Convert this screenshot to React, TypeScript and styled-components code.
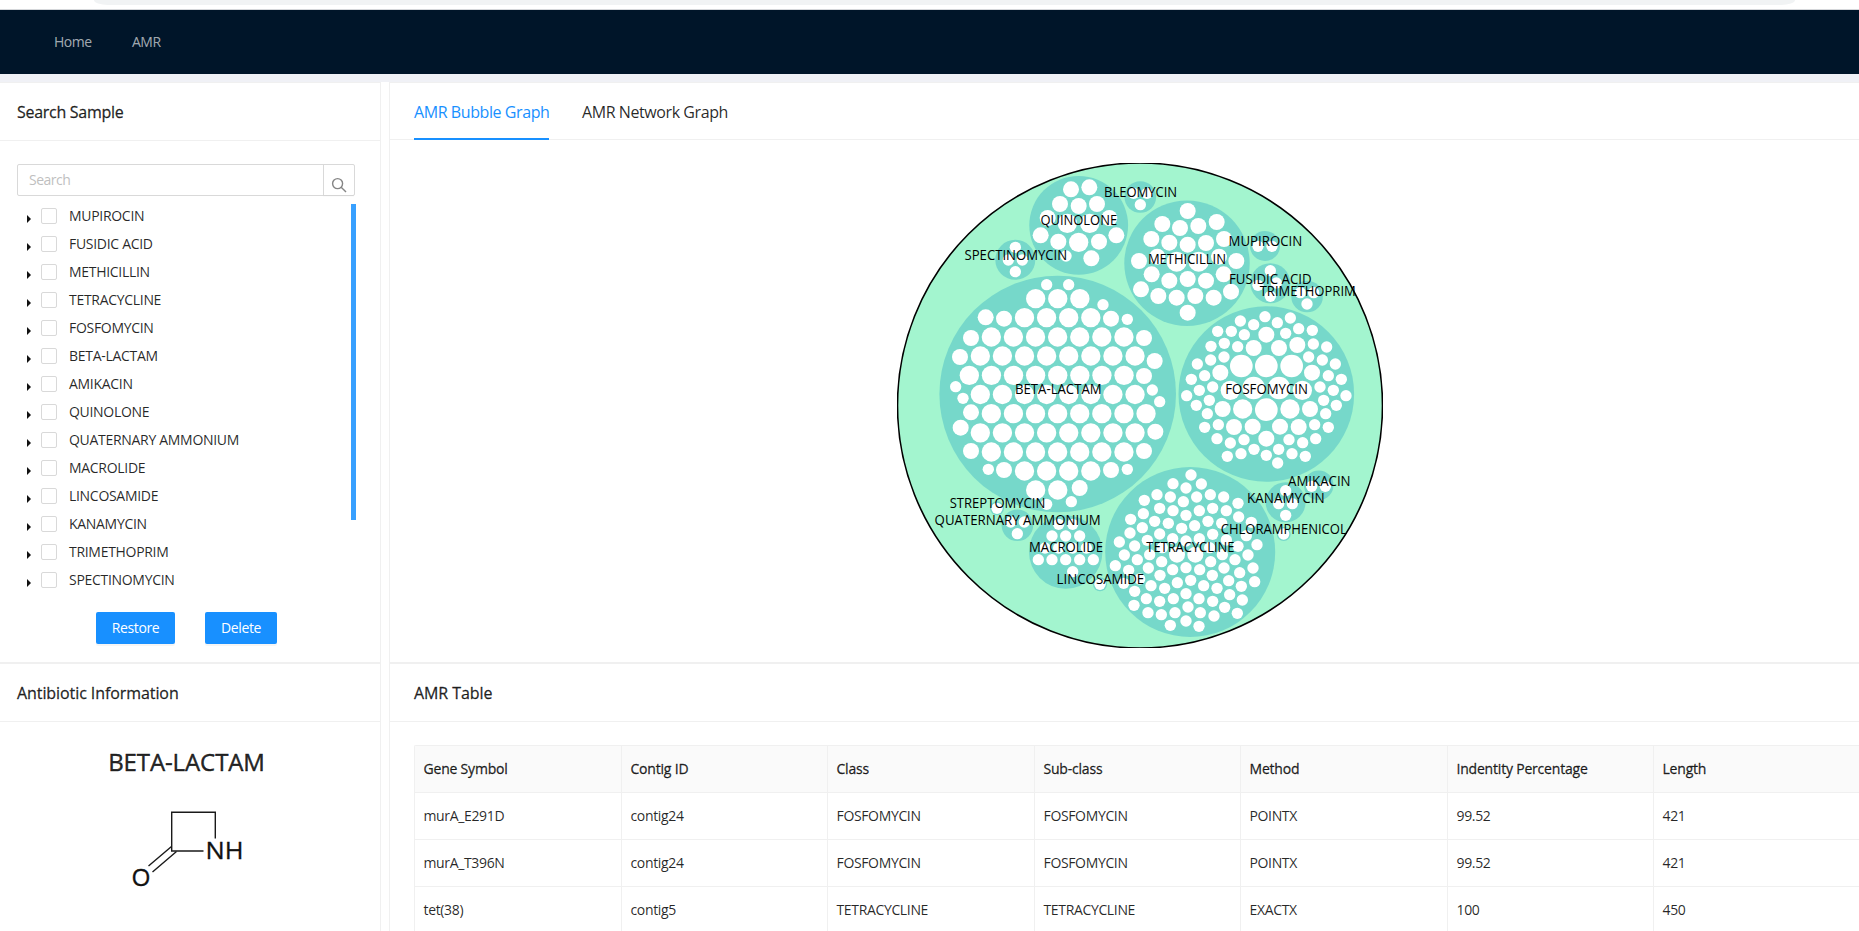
import React from 'react';
import styled, { createGlobalStyle } from 'styled-components';

const line = '#f0f0f0';
const ink = 'rgba(0, 0, 0, 0.85)';
const blue = '#1890ff';

const GlobalStyle = createGlobalStyle`
  *, *::before, *::after { box-sizing: border-box; }
  html, body { margin: 0; padding: 0; }
  body {
    overflow: hidden;
    background: #fff;
    color: ${ink};
    font: 400 14px/22px 'Open Sans', 'Noto Sans', sans-serif;
    letter-spacing: -0.5px;
  }
`;

const Page = styled.div`
  display: flex;
  flex-direction: column;
  width: 1859px;
  height: 931px;
  overflow: hidden;
`;

const BrowserEdge = styled.div`
  flex: none;
  height: 10px;
  padding: 0 64px 0 94px;
  border-bottom: 1px solid #d5d7da;
`;

const AddressBar = styled.div`
  height: 5px;
  background: #f1f3f4;
  border-radius: 0 0 14px 14px / 0 0 5px 5px;
`;

const NavBar = styled.nav`
  flex: none;
  display: flex;
  gap: 40px;
  height: 64px;
  padding-left: 54px;
  background: #001529;
`;

const NavItem = styled.a<{ $width: number }>`
  width: ${(p) => p.$width}px;
  line-height: 64px;
  color: rgba(255, 255, 255, 0.65);
  white-space: nowrap;
`;

const Strip = styled.div`
  flex: none;
  height: 8px;
  background: #f0f1f6;
`;

const Columns = styled.main`
  flex: 1;
  display: flex;
  gap: 8px;
  min-height: 0;
`;

const Side = styled.div`
  flex: none;
  display: flex;
  flex-direction: column;
  width: 381px;
`;

const Content = styled.div`
  flex: 1;
  display: flex;
  flex-direction: column;
  min-width: 0;
`;

const Card = styled.section<{ $height: number; $edge: 'left' | 'right' }>`
  flex: none;
  display: flex;
  flex-direction: column;
  height: ${(p) => p.$height}px;
  border: solid ${line};
  border-width: ${(p) => (p.$edge === 'left' ? '1px 0 1px 1px' : '1px 1px 1px 0')};
`;

const CardTitle = styled.h2<{ $indent: number; $tracking?: number }>`
  flex: none;
  height: 58px;
  margin: 0;
  padding-left: ${(p) => p.$indent}px;
  border-bottom: 1px solid ${line};
  font-size: 16px;
  font-weight: 400;
  line-height: 59px;
  letter-spacing: ${(p) => p.$tracking ?? -0.08}px;
  -webkit-text-stroke: 0.3px currentColor;
`;

const SearchRow = styled.div`
  display: flex;
  flex: none;
  width: 338px;
  height: 32px;
  margin: 23px 0 0 17px;
  border: 1px solid #d9d9d9;
  border-radius: 2px;
`;

const SearchInput = styled.div`
  flex: 1;
  padding-left: 11px;
  line-height: 30px;
  color: #bfbfbf;
`;

const SearchButton = styled.div`
  display: flex;
  justify-content: center;
  width: 31px;
  padding-top: 12px;
  border-left: 1px solid #d9d9d9;
  box-shadow: 0 2px 0 rgba(0, 0, 0, 0.015);
`;

const TreeArea = styled.div`
  display: flex;
  flex: none;
  justify-content: space-between;
  width: 356px;
  height: 396px;
  margin-top: 8px;
`;

const Tree = styled.ul`
  margin: 0;
  padding: 0 0 0 26px;
  list-style: none;
  letter-spacing: -0.3px;
`;

const TreeRow = styled.li`
  display: flex;
  align-items: center;
  height: 28px;
  padding-bottom: 4px;
  line-height: 24px;
  white-space: nowrap;
`;

const Arrow = styled.span`
  width: 0;
  height: 0;
  margin: 6px 10px 0 1px;
  border: solid transparent;
  border-width: 4px 0 4px 4px;
  border-left-color: #111;
`;

const Checkbox = styled.span`
  width: 16px;
  height: 16px;
  margin-right: 12px;
  border: 1px solid #d9d9d9;
  border-radius: 2px;
`;

const ScrollThumb = styled.div`
  width: 5px;
  height: 316px;
  background: #38a0ff;
`;

const Actions = styled.div`
  display: flex;
  gap: 30px;
  margin: 12px 0 0 96px;
`;

const Button = styled.button<{ $width: number }>`
  width: ${(p) => p.$width}px;
  height: 32px;
  padding: 0;
  border: 0;
  border-radius: 2px;
  background: ${blue};
  box-shadow: 0 2px 0 rgba(0, 0, 0, 0.04);
  color: #fff;
  font: inherit;
  letter-spacing: -0.4px;
`;

const Antibiotic = styled.div`
  display: flex;
  flex-direction: column;
  align-items: center;
  width: 373px;
  padding-top: 22px;
`;

const AntibioticName = styled.h3`
  margin: 0;
  font-size: 24px;
  font-weight: 400;
  line-height: 35px;
  letter-spacing: -0.1px;
  -webkit-text-stroke: 0.45px currentColor;
`;

const Molecule = styled.svg`
  width: 120px;
  height: 84px;
  margin: 27px 0 0 2px;
  overflow: visible;
  letter-spacing: 0;
`;

const Tabs = styled.div`
  flex: none;
  display: flex;
  gap: 33px;
  height: 57px;
  padding-left: 24px;
  border-bottom: 1px solid ${line};
`;

const Tab = styled.div<{ $active?: boolean; $width: number }>`
  width: ${(p) => p.$width}px;
  height: 57px;
  border-bottom: 2px solid ${(p) => (p.$active ? blue : 'transparent')};
  color: ${(p) => (p.$active ? blue : ink)};
  font-size: 16px;
  line-height: 59px;
  letter-spacing: -0.42px;
  white-space: nowrap;
`;

const BubbleChart = styled.svg`
  flex: none;
  width: 486px;
  height: 485px;
  margin: 23px 0 0 507px;
  letter-spacing: 0;
`;

const TableFrame = styled.div`
  margin: 23px 0 0 24px;
  overflow: hidden;
`;

const Table = styled.table`
  width: 1653px;
  table-layout: fixed;
  border-collapse: separate;
  border-spacing: 0;
  border: solid ${line};
  border-width: 1px 0 0 1px;
  border-radius: 2px 0 0 0;
`;

const Column = styled.col<{ $width: number }>`
  width: ${(p) => p.$width}px;
`;

const cell = `
  height: 47px;
  padding: 0 8px 0 8.5px;
  border: solid ${line};
  border-width: 0 1px 1px 0;
  text-align: left;
  white-space: nowrap;
`;

const HeadCell = styled.th`
  ${cell}
  background: #fafafa;
  font-weight: 400;
  letter-spacing: -0.2px;
  -webkit-text-stroke: 0.3px currentColor;
`;

const Cell = styled.td`
  ${cell}
  letter-spacing: -0.35px;
`;

type Dot = [number, number, number?];

interface Bubble {
  name: string;
  cx: number;
  cy: number;
  r: number;
  label: [number, number, number];
  origin: [number, number];
  dots: Dot[];
}

const row = (y: number, from: number, count: number): Dot[] =>
  Array.from({ length: count }, (_, i): Dot => [from + i * 66.3, y, 29]);

const topLeft: [number, number] = [930, 160];
const topRight: [number, number] = [1110, 160];
const bottomLeft: [number, number] = [920, 460];
const bottomRight: [number, number] = [1100, 460];

/* Dot positions and radii are in thirds of a pixel, counted from each bubble's origin. */
const bubbles: Bubble[] = [
  {
    name: 'QUINOLONE', cx: 1078.7, cy: 225.3, r: 49.4, label: [1040.2, 225, 77], origin: topLeft,
    dots: [[423, 88, 24], [478, 82, 24], [390, 132, 24], [446, 138, 24], [501, 132, 24], [353, 174, 24], [538, 174, 24], [412, 190, 29], [479, 190, 29], [332, 226, 24], [559, 226, 24], [385, 245, 24], [507, 245, 24], [446, 247, 29], [408, 288], [484, 295, 24]],
  },
  { name: 'BLEOMYCIN', cx: 1140.3, cy: 197, r: 15.8, label: [1103.7, 197, 73.5], origin: topLeft, dots: [[611, 100], [651, 100], [631, 134]] },
  { name: 'SPECTINOMYCIN', cx: 1015.3, cy: 259.8, r: 20, label: [964.2, 260, 103], origin: topLeft, dots: [[256, 262], [235, 300], [277, 300], [256, 335]] },
  {
    name: 'METHICILLIN', cx: 1187, cy: 263.2, r: 62.7, label: [1147.6, 264, 78.5], origin: topRight,
    dots: [[233, 153, 24], [157, 192, 24], [320, 186, 24], [210, 204, 24], [265, 198, 24], [124, 237, 24], [178, 248, 24], [233, 254, 24], [288, 249, 24], [342, 237, 24], [142, 290, 24], [327, 290, 24], [87, 303, 24], [200, 305, 30], [266, 305, 30], [379, 303, 24], [125, 343, 24], [341, 343, 24], [178, 362, 24], [233, 357, 24], [288, 362, 24], [93, 388, 24], [363, 395, 24], [145, 408, 24], [200, 413, 24], [256, 408, 24], [311, 413, 24], [233, 458, 24]],
  },
  { name: 'MUPIROCIN', cx: 1265, cy: 246, r: 15, label: [1228.3, 246, 74], origin: topRight, dots: [[444, 259], [486, 259]] },
  { name: 'FUSIDIC ACID', cx: 1270.3, cy: 283.2, r: 20, label: [1228.7, 284, 83], origin: topRight, dots: [[481, 332], [444, 376], [499, 369], [481, 409]] },
  { name: 'TRIMETHOPRIM', cx: 1307.1, cy: 296.5, r: 15.8, label: [1259.4, 296, 96.5], origin: topRight, dots: [[571, 398], [611, 398], [591, 432]] },
  {
    name: 'BETA-LACTAM', cx: 1057.7, cy: 394, r: 118.3, label: [1014.7, 394, 87], origin: [930, 270],
    dots: [
      [350, 44], [416, 44], ...row(86, 317, 3), [519, 104],
      [167, 142, 24], [222, 146, 24], ...row(143, 283.5, 4), [543, 146, 24], [592, 148],
      [123, 204, 24], ...row(201, 184, 7), [642, 204, 24],
      [90, 261, 24], ...row(258, 151, 8), [674, 273, 24],
      ...row(316, 118, 8), [642, 318, 24],
      [77, 350], [99, 385], ...row(373.5, 151, 8), [667, 360], [689, 395],
      [123, 427, 24], ...row(431, 184, 8),
      [92, 473, 24], ...row(488.5, 151, 8), [676, 485, 24],
      [123, 543, 24], ...row(546, 184, 7), [642, 543, 24],
      [175, 598], [222, 600, 24], ...row(603, 283.5, 4), [543, 600, 24], [592, 598],
      ...row(660, 317, 2), [449, 654, 24], [350, 703], [424, 695],
    ],
  },
  {
    name: 'FOSFOMYCIN', cx: 1266.3, cy: 394, r: 87.8, label: [1225, 394, 83], origin: [1170, 300],
    dots: [[285, 50], [211, 63], [251, 74], [322, 68], [361, 54], [143, 94], [184, 94], [223, 104], [289, 104, 24], [347, 100], [386, 86], [427, 91], [382, 135, 24], [430, 132], [470, 141], [123, 139], [163, 130], [203, 140], [251, 144, 24], [327, 144, 24], [162, 171], [122, 180], [416, 171], [457, 180], [82, 192], [496, 192], [214, 198, 34], [289, 198, 34], [365, 198, 34], [151, 218, 24], [426, 218, 24], [104, 227], [475, 227], [64, 238], [514, 238], [128, 261], [450, 261], [88, 271], [490, 271], [50, 287], [528, 287], [181, 271, 29], [251, 264, 34], [327, 264, 34], [397, 271, 29], [118, 301], [461, 301], [79, 316], [499, 316], [158, 327, 24], [218, 327, 29], [289, 329, 34], [360, 327, 29], [420, 327, 24], [112, 341], [467, 341], [104, 382], [145, 374], [192, 381, 24], [248, 380, 24], [330, 380, 24], [386, 381, 24], [434, 374], [475, 382], [141, 416], [181, 429], [222, 419], [289, 416, 24], [357, 419], [398, 428], [437, 416], [172, 469], [213, 461], [252, 448], [289, 466], [326, 448], [366, 461], [406, 469], [323, 489]],
  },
  {
    name: 'TETRACYCLINE', cx: 1190.2, cy: 552, r: 85, label: [1146, 552, 88.5], origin: bottomRight,
    dots: [[273, 45], [219, 71], [304, 72], [258, 84], [171, 104], [211, 111], [290, 111], [331, 104], [371, 111], [133, 121], [250, 125], [414, 130], [179, 145], [219, 152], [298, 152], [338, 145], [379, 152], [130, 161], [258, 166], [92, 178], [164, 184], [205, 190], [284, 197], [324, 184], [365, 190], [416, 171], [454, 187], [127, 203], [245, 205], [90, 219], [179, 222], [338, 223], [439, 227], [379, 240], [58, 246], [142, 241], [104, 258], [414, 259], [471, 254], [218, 236], [258, 243], [298, 236], [149, 284], [187, 263], [367, 284], [329, 263], [73, 285], [112, 299], [405, 299], [444, 285], [231, 284, 24], [286, 284, 24], [185, 305], [332, 305], [46, 317], [86, 331], [145, 324], [218, 329], [258, 323], [299, 329], [372, 324], [419, 338], [459, 324], [180, 346], [337, 346], [272, 361], [386, 362], [464, 365], [232, 368], [311, 377], [71, 370], [119, 357], [153, 377], [194, 385], [351, 385], [424, 379], [104, 394], [258, 401], [389, 404], [139, 416], [220, 416], [297, 416], [102, 436], [179, 424], [338, 424], [427, 420], [264, 441], [374, 442], [144, 458], [184, 464], [225, 458], [301, 458], [342, 468], [412, 460], [211, 496], [258, 483], [297, 499]],
  },
  { name: 'KANAMYCIN', cx: 1285.6, cy: 502.3, r: 20, label: [1246.7, 503, 78], origin: bottomRight, dots: [[557, 92], [536, 131], [577, 131], [557, 166]] },
  { name: 'AMIKACIN', cx: 1318.7, cy: 485.2, r: 14.8, label: [1287.7, 486, 63], origin: bottomRight, dots: [[635, 79], [676, 79]] },
  { name: 'CHLORAMPHENICOL', cx: 1283.7, cy: 534, r: 7, label: [1220.4, 534, 126.5], origin: bottomRight, dots: [[551, 222]] },
  { name: 'STREPTOMYCIN', cx: 997, cy: 508.3, r: 7, label: [949.4, 508, 96], origin: bottomLeft, dots: [[231, 145]] },
  { name: 'QUATERNARY AMMONIUM', cx: 1017.4, cy: 525.3, r: 15.8, label: [934.3, 525, 166.5], origin: bottomLeft, dots: [[272, 186], [313, 186], [292, 221]] },
  {
    name: 'MACROLIDE', cx: 1065.7, cy: 552, r: 36.7, label: [1028.7, 552, 74.5], origin: bottomLeft,
    dots: [[416, 193], [458, 193], [396, 228], [437, 228], [479, 228], [375, 264], [416, 264], [458, 264], [499, 264], [355, 299], [396, 299], [437, 299], [479, 299], [520, 299], [458, 335]],
  },
  { name: 'LINCOSAMIDE', cx: 1100, cy: 584.3, r: 7, label: [1056.3, 584, 88], origin: bottomLeft, dots: [[540, 373]] },
];

const classes = ['MUPIROCIN', 'FUSIDIC ACID', 'METHICILLIN', 'TETRACYCLINE', 'FOSFOMYCIN', 'BETA-LACTAM', 'AMIKACIN', 'QUINOLONE', 'QUATERNARY AMMONIUM', 'MACROLIDE', 'LINCOSAMIDE', 'KANAMYCIN', 'TRIMETHOPRIM', 'SPECTINOMYCIN'];

const columnWidths = [207, 206, 207, 206, 207, 206, 207, 206];

const headings = ['Gene Symbol', 'Contig ID', 'Class', 'Sub-class', 'Method', 'Indentity Percentage', 'Length', ''];

const records = [
  ['murA_E291D', 'contig24', 'FOSFOMYCIN', 'FOSFOMYCIN', 'POINTX', '99.52', '421', ''],
  ['murA_T396N', 'contig24', 'FOSFOMYCIN', 'FOSFOMYCIN', 'POINTX', '99.52', '421', ''],
  ['tet(38)', 'contig5', 'TETRACYCLINE', 'TETRACYCLINE', 'EXACTX', '100', '450', ''],
];

function Bubbles() {
  return (
    <BubbleChart viewBox="897 163 486 485">
      <circle cx={1140} cy={405.5} r={242.5} fill="#a3f5cf" stroke="#000" strokeWidth={1.6} />
      {bubbles.map((b) => (
        <g key={b.name}>
          <circle cx={b.cx} cy={b.cy} r={b.r} fill="#76d8ca" />
          <g transform={`translate(${b.origin.join(' ')}) scale(${1 / 3})`} fill="#fff">
            {b.dots.map(([x, y, r = 17], i) => (
              <circle key={i} cx={x} cy={y} r={r} />
            ))}
          </g>
        </g>
      ))}
      {bubbles.map((b) => (
        <text key={b.name} x={b.label[0] + 0.3} y={b.label[1]} textLength={b.label[2] - 0.4} lengthAdjust="spacingAndGlyphs" fontSize={14} fill="#000">
          {b.name}
        </text>
      ))}
    </BubbleChart>
  );
}

export default function App() {
  return (
    <Page>
      <GlobalStyle />
      <BrowserEdge>
        <AddressBar />
      </BrowserEdge>
      <NavBar>
        <NavItem $width={38}>Home</NavItem>
        <NavItem $width={31}>AMR</NavItem>
      </NavBar>
      <Strip />
      <Columns>
        <Side>
          <Card $height={581} $edge="right">
            <CardTitle $indent={17} $tracking={-0.28}>Search Sample</CardTitle>
            <SearchRow>
              <SearchInput>Search</SearchInput>
              <SearchButton>
                <svg width="16" height="16" viewBox="0 0 16 16" fill="none" stroke="#858585" strokeWidth="1.4">
                  <circle cx="6.6" cy="6.6" r="5" />
                  <path d="M10.2 10.2 L15 15" />
                </svg>
              </SearchButton>
            </SearchRow>
            <TreeArea>
              <Tree>
                {classes.map((name) => (
                  <TreeRow key={name}>
                    <Arrow />
                    <Checkbox />
                    {name}
                  </TreeRow>
                ))}
              </Tree>
              <ScrollThumb />
            </TreeArea>
            <Actions>
              <Button $width={79}>Restore</Button>
              <Button $width={72}>Delete</Button>
            </Actions>
          </Card>
          <Card $height={300} $edge="right">
            <CardTitle $indent={17}>Antibiotic Information</CardTitle>
            <Antibiotic>
              <AntibioticName>BETA-LACTAM</AntibioticName>
              <Molecule viewBox="128 806 120 84">
                <g fill="none" stroke="#1a1a1a" strokeWidth="1.4">
                  <path d="M203.5 851 H171.7 V812.3 H215.3 V838.5" />
                  <path d="M171.5 846.5 L148.5 866 M176.5 851.5 L152.5 872" />
                </g>
                <g fill="#111" fontSize="23" fontFamily="'Open Sans', sans-serif" stroke="#111" strokeWidth="0.3">
                  <text x="205.5" y="858.5" textLength="38" lengthAdjust="spacingAndGlyphs">NH</text>
                  <text x="131.5" y="885.5" textLength="19" lengthAdjust="spacingAndGlyphs">O</text>
                </g>
              </Molecule>
            </Antibiotic>
          </Card>
        </Side>
        <Content>
          <Card $height={581} $edge="left">
            <Tabs>
              <Tab $active $width={135}>AMR Bubble Graph</Tab>
              <Tab $width={146}>AMR Network Graph</Tab>
            </Tabs>
            <Bubbles />
          </Card>
          <Card $height={300} $edge="left">
            <CardTitle $indent={24}>AMR Table</CardTitle>
            <TableFrame>
              <Table>
                <colgroup>
                  {columnWidths.map((w, i) => (
                    <Column key={i} $width={w} />
                  ))}
                </colgroup>
                <thead>
                  <tr>
                    {headings.map((h, i) => (
                      <HeadCell key={i}>{h}</HeadCell>
                    ))}
                  </tr>
                </thead>
                <tbody>
                  {records.map((r) => (
                    <tr key={r[0]}>
                      {r.map((v, i) => (
                        <Cell key={i}>{v}</Cell>
                      ))}
                    </tr>
                  ))}
                </tbody>
              </Table>
            </TableFrame>
          </Card>
        </Content>
      </Columns>
    </Page>
  );
}
